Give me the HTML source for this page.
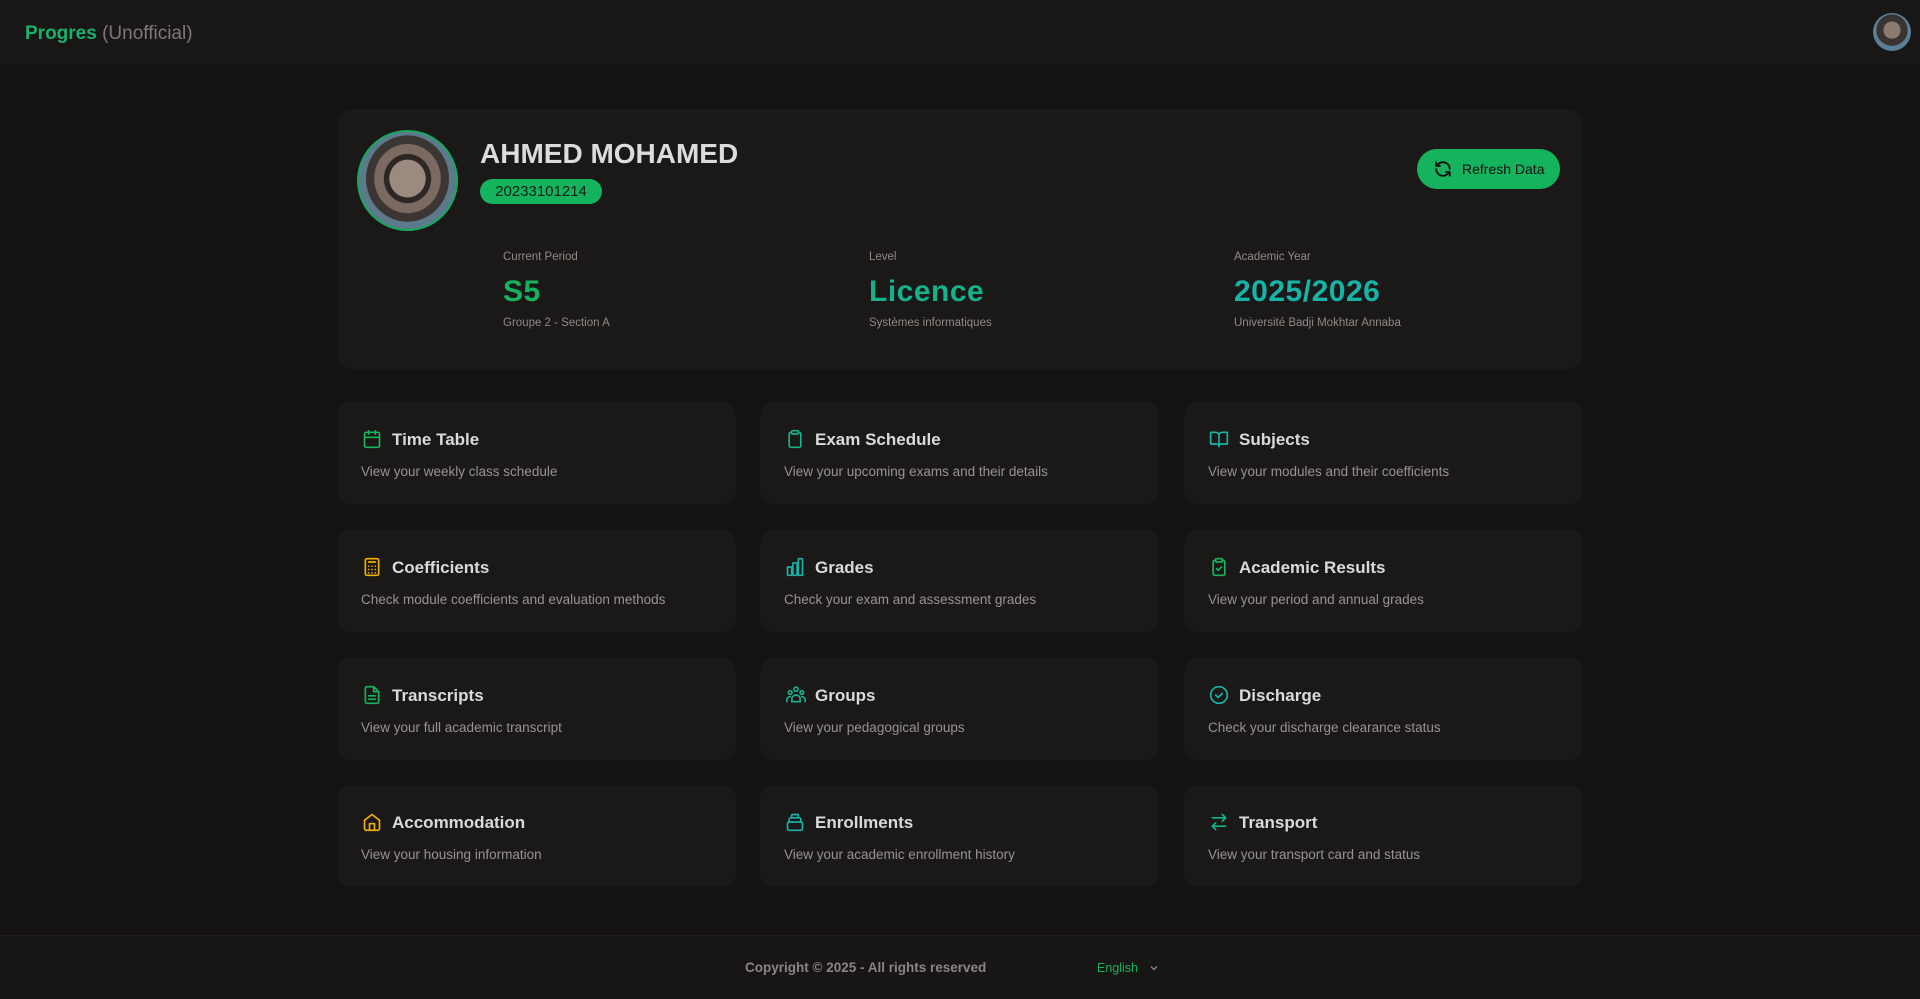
<!DOCTYPE html>
<html><head><meta charset="utf-8"><style>
*{box-sizing:border-box;margin:0;padding:0}
body{width:1920px;height:999px;background:#141212;font-family:"Liberation Sans",sans-serif;position:relative;overflow:hidden;color:#ddd}
.hdr{position:absolute;left:0;top:0;width:1920px;height:64px;background:#191616}
.logo{position:absolute;left:25px;top:23px;font-size:19px}
.logo b{color:#17b36a}.logo span{color:#7d7878}
.av{position:absolute;left:1873px;top:13px;width:38px;height:38px;border-radius:50%;background:radial-gradient(circle at 50% 45%,#8a7a70 0 30%,#3a3431 31% 55%,#5b7f96 56%)}
.prof{position:absolute;left:337px;top:109px;width:1246px;height:260px;background:#1b1818;border-radius:16px}
.pav{position:absolute;left:20px;top:21px;width:101px;height:101px;border-radius:50%;border:2px solid #17a85e;background:radial-gradient(ellipse at 50% 48%,#9b8a80 0 26%,#2c2624 27% 34%,#7a6a62 35% 48%,#3b3534 49% 60%,#5d7a8c 61%)}
.name{position:absolute;left:143px;top:29px;font-size:28px;font-weight:bold;color:#dcdcdc}
.badge{position:absolute;left:143px;top:70px;width:122px;height:25px;border-radius:13px;background:#16b35e;color:#102016;font-size:15px;text-align:center;line-height:25px}
.btn{position:absolute;left:1080px;top:40px;width:143px;height:40px;border-radius:20px;background:#16b35e;color:#111;font-size:14px;line-height:40px;padding-left:45px}
.btn svg{position:absolute;left:17px;top:11px}
.st{position:absolute;top:142px}
.st .l{font-size:11.5px;color:#8f8a88}
.st .v{font-size:30px;font-weight:bold;margin-top:12px;letter-spacing:.5px}
.st .s{font-size:11.5px;color:#8f8a88;margin-top:8px}
.card{position:absolute;width:399px;height:102px;background:#1b1818;border-radius:14px}
.card svg{position:absolute;left:25px;top:27px}
.card .t{position:absolute;left:55px;top:28px;font-size:17px;font-weight:bold;color:#dadada}
.card .d{position:absolute;left:24px;top:62px;font-size:13.5px;color:#979393}
.ftr{position:absolute;left:0;top:935px;width:1920px;height:64px;background:#181515;border-top:1px solid #201c1c}
</style></head><body>
<div class="hdr"><div class="logo"><b>Progres</b> <span>(Unofficial)</span></div><div class="av"></div></div>
<div class="prof">
<div class="pav"></div>
<div class="name">AHMED MOHAMED</div>
<div class="badge">20233101214</div>
<div class="btn"><svg width="18" height="18" viewBox="0 0 24 24" fill="none" stroke="#111" stroke-width="2.4" stroke-linecap="round" stroke-linejoin="round"><path d="M21 12a9 9 0 0 0-15-6.7L3 8"/><path d="M3 3v5h5"/><path d="M3 12a9 9 0 0 0 15 6.7l3-2.7"/><path d="M16 16h5v5"/></svg>Refresh Data</div>
<div class="st" style="left:166px"><div class="l">Current Period</div><div class="v" style="color:#16b35e">S5</div><div class="s">Groupe 2 - Section A</div></div>
<div class="st" style="left:532px"><div class="l">Level</div><div class="v" style="color:#16b08a">Licence</div><div class="s">Systèmes informatiques</div></div>
<div class="st" style="left:897px"><div class="l">Academic Year</div><div class="v" style="color:#17b3a6">2025/2026</div><div class="s">Université Badji Mokhtar Annaba</div></div>
</div>

<div class="card" style="left:337px;top:402px"><svg width="20" height="20" viewBox="0 0 24 24" fill="none" stroke="#16b35e" stroke-width="2" stroke-linecap="round"><rect x="3" y="4" width="18" height="18" rx="2"/><path d="M8 2v4M16 2v4M3 10h18"/></svg><div class="t">Time Table</div><div class="d">View your weekly class schedule</div></div>
<div class="card" style="left:760px;top:402px"><svg width="20" height="20" viewBox="0 0 24 24" fill="none" stroke="#16b08a" stroke-width="2" stroke-linecap="round"><rect x="8" y="2" width="8" height="4" rx="1"/><path d="M16 4h1a2 2 0 0 1 2 2v14a2 2 0 0 1-2 2H7a2 2 0 0 1-2-2V6a2 2 0 0 1 2-2h1"/></svg><div class="t">Exam Schedule</div><div class="d">View your upcoming exams and their details</div></div>
<div class="card" style="left:1184px;top:402px"><svg width="20" height="20" viewBox="0 0 24 24" fill="none" stroke="#17b3a6" stroke-width="2" stroke-linejoin="round"><path d="M2 4h6a4 4 0 0 1 4 4v13a3 3 0 0 0-3-3H2zM22 4h-6a4 4 0 0 0-4 4v13a3 3 0 0 1 3-3h7z"/></svg><div class="t">Subjects</div><div class="d">View your modules and their coefficients</div></div>

<div class="card" style="left:337px;top:530px"><svg width="20" height="20" viewBox="0 0 24 24" fill="none" stroke="#f0b000" stroke-width="2" stroke-linecap="round"><rect x="4" y="2" width="16" height="20" rx="2"/><path d="M8 6h8M8 11h.01M12 11h.01M16 11h.01M8 15h.01M12 15h.01M16 15h.01M8 19h.01M12 19h.01M16 19h.01"/></svg><div class="t">Coefficients</div><div class="d">Check module coefficients and evaluation methods</div></div>
<div class="card" style="left:760px;top:530px"><svg width="20" height="20" viewBox="0 0 24 24" fill="none" stroke="#17b3a6" stroke-width="2"><rect x="3" y="12" width="5" height="10" rx="1"/><rect x="9.5" y="7" width="5" height="15" rx="1"/><rect x="16" y="2" width="5" height="20" rx="1"/></svg><div class="t">Grades</div><div class="d">Check your exam and assessment grades</div></div>
<div class="card" style="left:1184px;top:530px"><svg width="20" height="20" viewBox="0 0 24 24" fill="none" stroke="#16b35e" stroke-width="2" stroke-linecap="round" stroke-linejoin="round"><rect x="8" y="2" width="8" height="4" rx="1"/><path d="M16 4h1a2 2 0 0 1 2 2v14a2 2 0 0 1-2 2H7a2 2 0 0 1-2-2V6a2 2 0 0 1 2-2h1"/><path d="M9 14l2 2 4-4"/></svg><div class="t">Academic Results</div><div class="d">View your period and annual grades</div></div>

<div class="card" style="left:337px;top:658px"><svg width="20" height="20" viewBox="0 0 24 24" fill="none" stroke="#16b35e" stroke-width="2" stroke-linecap="round" stroke-linejoin="round"><path d="M14 2H6a2 2 0 0 0-2 2v16a2 2 0 0 0 2 2h12a2 2 0 0 0 2-2V8z"/><path d="M14 2v6h6M8 13h8M8 17h8"/></svg><div class="t">Transcripts</div><div class="d">View your full academic transcript</div></div>
<div class="card" style="left:760px;top:658px"><svg width="22" height="20" viewBox="0 0 24 24" fill="none" stroke="#16b08a" stroke-width="2" stroke-linecap="round"><circle cx="12" cy="5" r="2.5"/><circle cx="5" cy="9" r="2.2"/><circle cx="19" cy="9" r="2.2"/><path d="M7 20v-3a5 5 0 0 1 10 0v3zM1 20v-2a4 4 0 0 1 4-4M23 20v-2a4 4 0 0 0-4-4"/></svg><div class="t">Groups</div><div class="d">View your pedagogical groups</div></div>
<div class="card" style="left:1184px;top:658px"><svg width="20" height="20" viewBox="0 0 24 24" fill="none" stroke="#17b3a6" stroke-width="2" stroke-linecap="round" stroke-linejoin="round"><circle cx="12" cy="12" r="10"/><path d="M8 12l3 3 5-5"/></svg><div class="t">Discharge</div><div class="d">Check your discharge clearance status</div></div>

<div class="card" style="left:337px;top:785px"><svg width="20" height="20" viewBox="0 0 24 24" fill="none" stroke="#f0b000" stroke-width="2" stroke-linejoin="round"><path d="M3 10l9-7 9 7v10a2 2 0 0 1-2 2H5a2 2 0 0 1-2-2z"/><path d="M9 22v-8h6v8"/></svg><div class="t">Accommodation</div><div class="d">View your housing information</div></div>
<div class="card" style="left:760px;top:785px"><svg width="20" height="20" viewBox="0 0 24 24" fill="none" stroke="#17b3a6" stroke-width="2" stroke-linejoin="round"><rect x="3" y="12" width="18" height="10" rx="2"/><path d="M5 12V9a2 2 0 0 1 2-2h10a2 2 0 0 1 2 2v3M8 7V4a1 1 0 0 1 1-1h6a1 1 0 0 1 1 1v3"/></svg><div class="t">Enrollments</div><div class="d">View your academic enrollment history</div></div>
<div class="card" style="left:1184px;top:785px"><svg width="20" height="20" viewBox="0 0 24 24" fill="none" stroke="#16b08a" stroke-width="2" stroke-linecap="round" stroke-linejoin="round"><path d="M16 3l4 4-4 4M20 7H4M8 21l-4-4 4-4M4 17h16"/></svg><div class="t">Transport</div><div class="d">View your transport card and status</div></div>

<div class="ftr">
<div style="position:absolute;left:745px;top:24px;font-size:13.5px;font-weight:bold;color:#8a8585">Copyright © 2025 - All rights reserved</div>
<div style="position:absolute;left:1035px;top:17px;width:1px;height:30px;background:#1b1818"></div>
<div style="position:absolute;left:1097px;top:25px;font-size:12.5px;color:#16b35e">English</div>
<svg style="position:absolute;left:1149px;top:27px" width="10" height="10" viewBox="0 0 10 10" fill="none" stroke="#8a8585" stroke-width="1.3"><path d="M2 3.5l3 3 3-3"/></svg>
</div>
</body></html>
